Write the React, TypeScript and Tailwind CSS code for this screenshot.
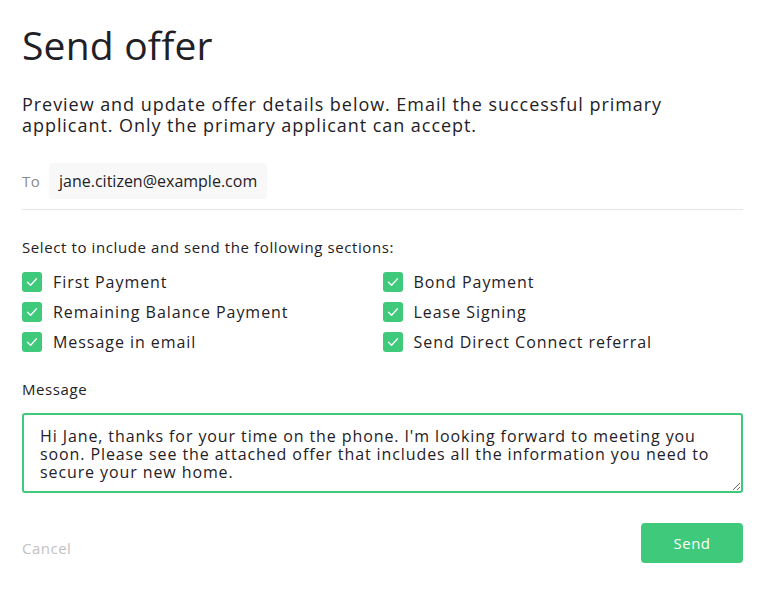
import React from "react";

const Check = () => (
  <span className="flex h-5 w-5 shrink-0 items-center justify-center rounded-[3px] bg-[#3fc97b]">
    <svg width="12" height="10" viewBox="0 0 12 10" fill="none">
      <path d="M1.5 5.2 L4.6 8.2 L10.5 1.8" stroke="white" strokeWidth="1.3" strokeLinecap="round" strokeLinejoin="round" />
    </svg>
  </span>
);

const Item = ({ label }: { label: string }) => (
  <label className="flex h-[30px] items-center gap-[11px] text-[16px] font-medium tracking-[0.95px] text-[#1f2126]">
    <Check />
    <span>{label}</span>
  </label>
);

export default function App() {
  return (
    <div className="min-h-[594px] w-[765px] bg-white px-[22px] pt-[20px] text-[#1f2126]" style={{ fontFamily: "'Open Sans', sans-serif" }}>
      <h1 className="text-[39px] font-medium leading-[50px] tracking-[0.2px]">Send offer</h1>
      <p className="mt-[24px] text-[18px] font-medium leading-[21px] tracking-[0.95px]">
        Preview and update offer details below. Email the successful primary applicant. Only the primary applicant can accept.
      </p>
      <div className="mt-[27px] flex items-center border-b border-[#e6e6e6] pb-[10px]">
        <span className="w-[27px] text-[15px] tracking-[0.5px] text-[#8a8a8a]">To</span>
        <span className="rounded-[4px] bg-[#f8f8f8] px-[10px] py-[8px] text-[16px] font-medium leading-[20px]">jane.citizen@example.com</span>
      </div>
      <p className="mt-[27px] text-[15px] font-medium leading-[20px] tracking-[0.6px]">Select to include and send the following sections:</p>
      <div className="mt-[10px] grid grid-cols-2">
        <Item label="First Payment" />
        <Item label="Bond Payment" />
        <Item label="Remaining Balance Payment" />
        <Item label="Lease Signing" />
        <Item label="Message in email" />
        <Item label="Send Direct Connect referral" />
      </div>
      <p className="mt-[22px] text-[15px] font-medium leading-[20px] tracking-[0.6px]">Message</p>
      <textarea
        className="mt-[14px] block h-[80px] w-full resize-y rounded-[3px] border-2 border-[#3fc97b] px-[16px] py-[12px] text-[16px] leading-[18px] tracking-[0.9px] text-[#1f2126] outline-none"
        style={{ fontFamily: "'Open Sans', sans-serif" }}
        defaultValue="Hi Jane, thanks for your time on the phone. I'm looking forward to meeting you soon. Please see the attached offer that includes all the information you need to secure your new home."
      />
      <div className="mt-[30px] flex items-center justify-between">
        <button className="mt-[10px] text-[15px] tracking-[0.5px] text-[#c2c2c2]">Cancel</button>
        <button className="h-[40px] w-[102px] rounded-[4px] bg-[#3fc97b] text-[15px] font-medium tracking-[0.5px] text-white">Send</button>
      </div>
    </div>
  );
}
